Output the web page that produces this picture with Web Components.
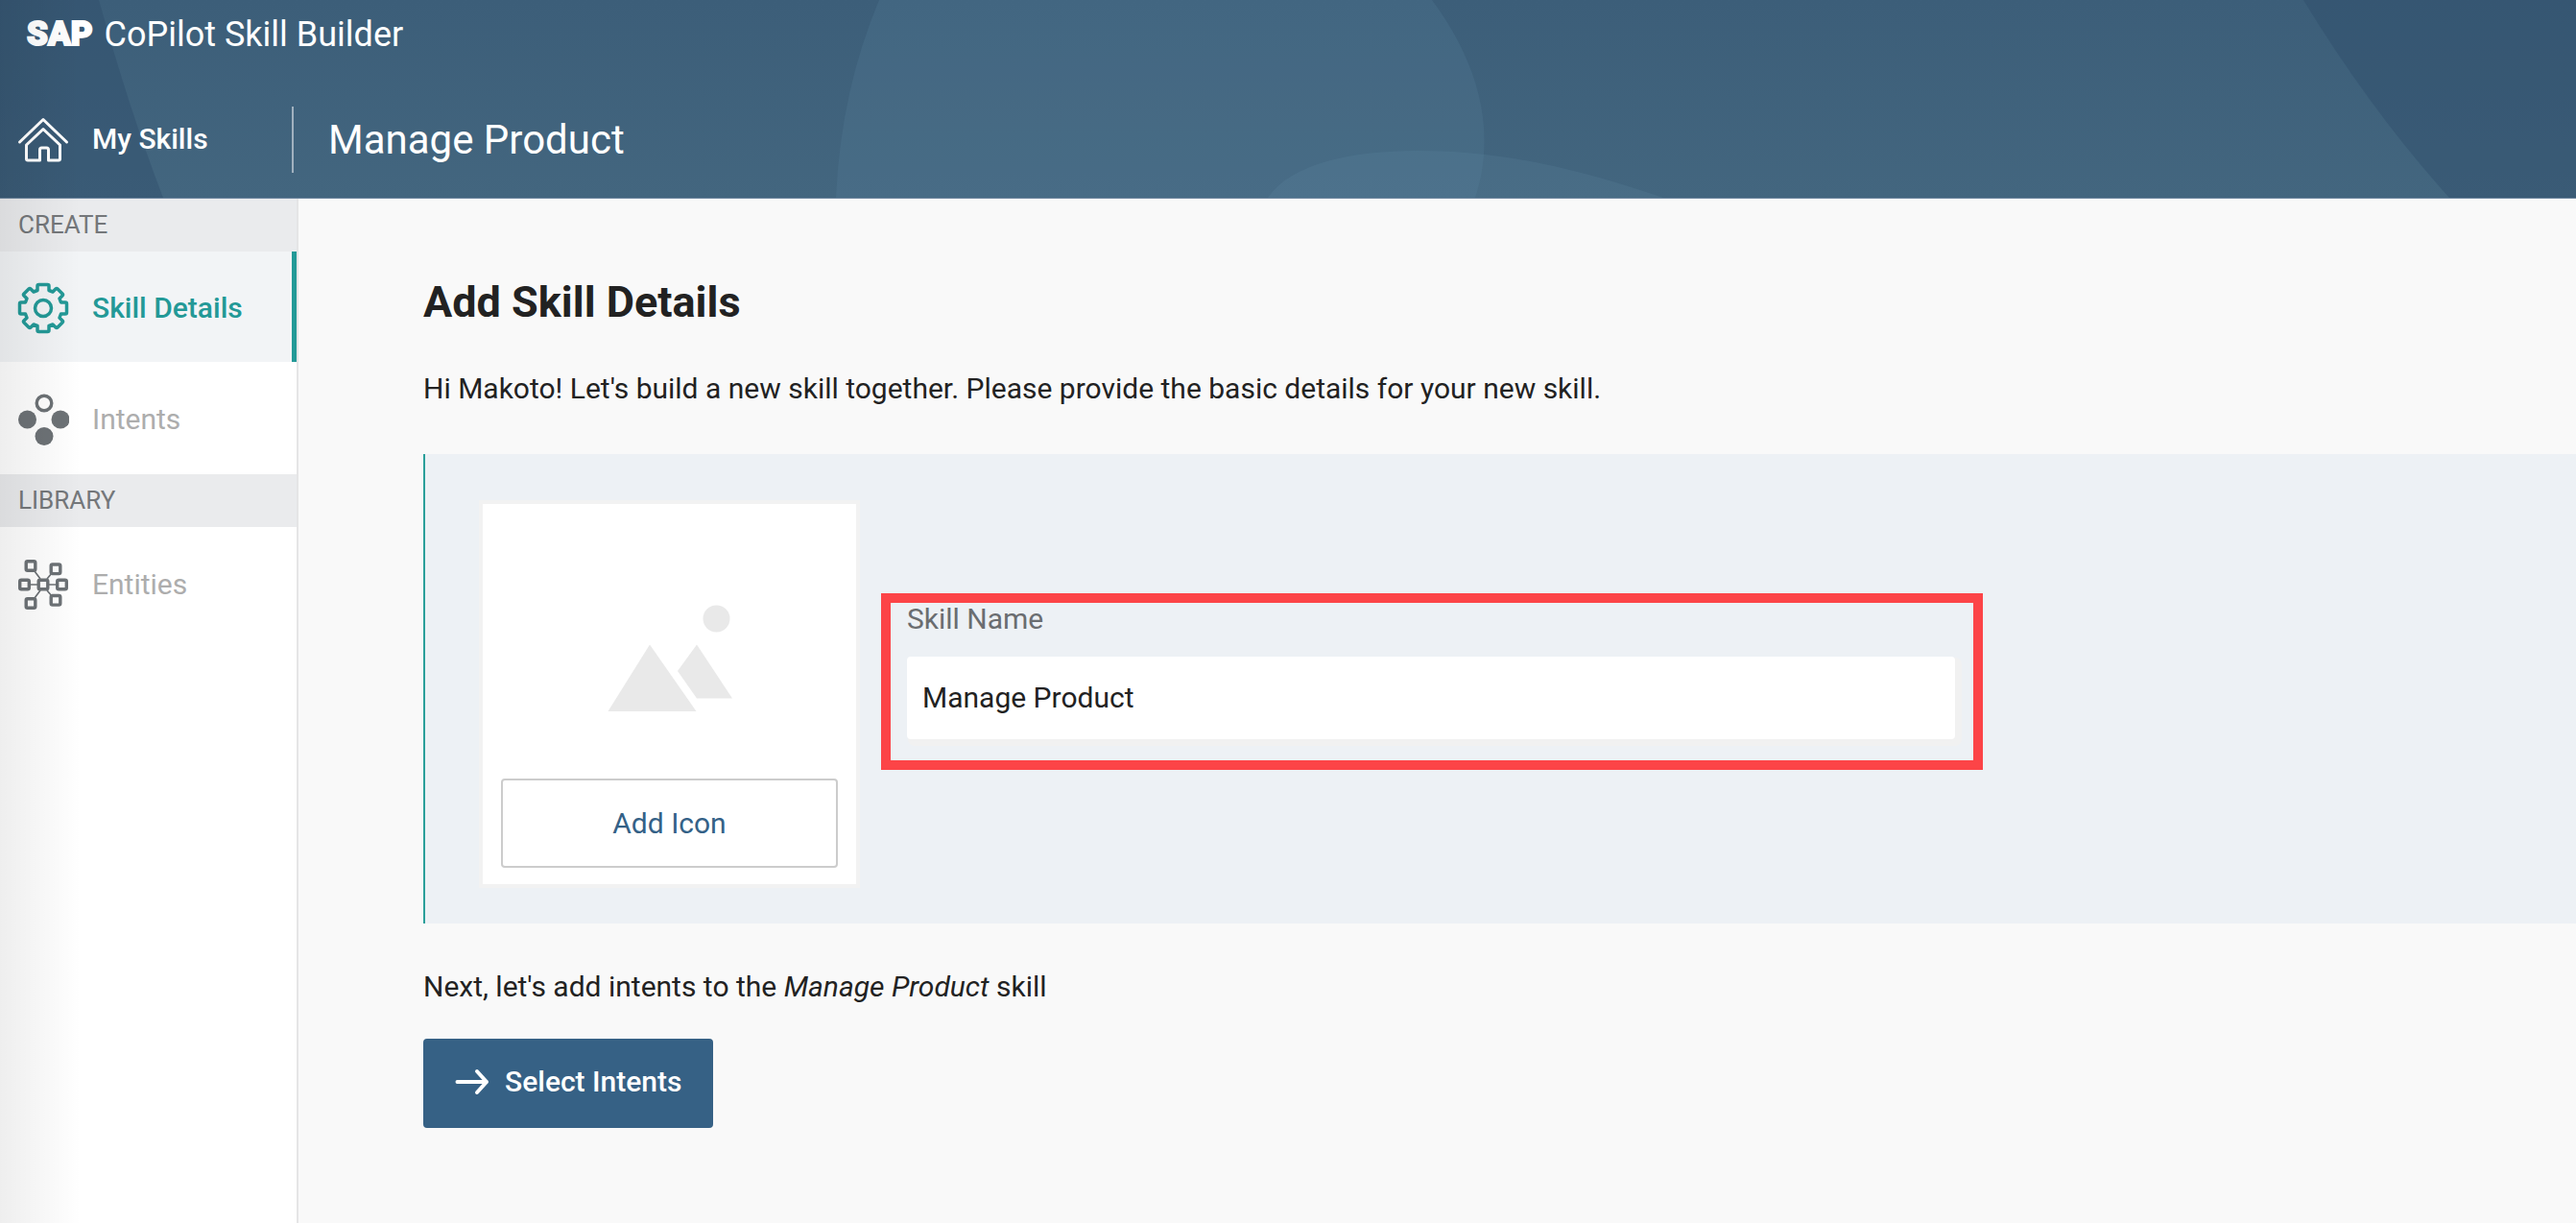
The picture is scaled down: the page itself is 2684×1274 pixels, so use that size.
<!DOCTYPE html>
<html lang="en">
<head>
<meta charset="utf-8">
<title>SAP CoPilot Skill Builder</title>
<style>
  html, body { margin: 0; min-height: 100%; }
  body { font-family: Roboto, "Liberation Sans", sans-serif; font-size: 30px; line-height: 40px; color: #222; background: #f9f9f9; }
</style>
</head>
<body>
<skill-app>
  <app-header slot="header" product="CoPilot Skill Builder" heading="Manage Product"></app-header>
  <side-nav slot="nav">
    <nav-group label="CREATE">
      <nav-item icon="gear" label="Skill Details" active></nav-item>
      <nav-item icon="intents" label="Intents"></nav-item>
    </nav-group>
    <nav-group label="LIBRARY">
      <nav-item icon="entities" label="Entities"></nav-item>
    </nav-group>
  </side-nav>
  <skill-details>
    <span slot="title">Add Skill Details</span>
    <span slot="intro">Hi Makoto! Let's build a new skill together. Please provide the basic details for your new skill.</span>
    <icon-picker slot="form"></icon-picker>
    <text-field slot="form" label="Skill Name" value="Manage Product"></text-field>
    <span slot="next">Next, let's add intents to the <em>Manage Product</em> skill</span>
    <primary-button slot="action">Select Intents</primary-button>
  </skill-details>
</skill-app>

<script>
const ICONS = {
  home: `<svg width="54" height="54" viewBox="0 0 54 54" fill="none" stroke="#fff" stroke-width="3" stroke-linecap="round" stroke-linejoin="round"><path d="M2.500 30 27 6.500 51.500 30"/><path d="M9.500 33 27 16.500 44.500 33V47.500Q44.500 49 43 49H32.500V38Q32.500 36 30.500 36H25.500Q23.500 36 23.500 38V49H11Q9.500 49 9.500 47.500Z"/></svg>`,
  gear: `<svg width="54" height="54" viewBox="-27 -27 54 54" fill="none" stroke="#239997" stroke-width="3.500" stroke-linejoin="round"><path d="M-6-20V-23Q-6-24.500-4.500-24.500H4.500Q6-24.500 6-23V-18.500L10-17L13-20Q14-21 15-20L20-15Q21-14 20-13L17-10L18.500-6H23Q24.500-6 24.500-4.500V4.500Q24.500 6 23 6H18.500L17 10L20 13Q21 14 20 15L15 20Q14 21 13 20L10 17L6 18.500V23Q6 24.500 4.500 24.500H-4.500Q-6 24.500-6 23V18.500L-10 17L-13 20Q-14 21-15 20L-20 15Q-21 14-20 13L-17 10L-18.500 6H-23Q-24.500 6-24.500 4.500V-4.500Q-24.500-6-23-6H-18.500L-17-10L-20-13Q-21-14-20-15L-15-20Q-14-21-13-20L-10-17L-6-18.500Z"/><circle r="8.500"/></svg>`,
  intents: `<svg width="54" height="54" viewBox="-27 -27 54 54" fill="#6d7276"><circle cx="1" cy="-17" r="7.800" fill="none" stroke="#6d7276" stroke-width="3.400"/><circle cx="-16.500" cy="0" r="9.500"/><circle cx="18" cy="0" r="9.500"/><circle cx="1" cy="17.500" r="9.500"/></svg>`,
  entities: `<svg width="54" height="54" viewBox="-27 -27 54 54" fill="none" stroke="#6d7276"><path stroke-width="1.700" d="M-9-14-3-6M9-12 4-6M-14 0H-5M14 0H5M-3 6-9 14M4 6 9 12"/><g stroke-width="3.400"><rect x="-4.800" y="-4.800" width="9.600" height="9.600" rx="1.500"/><rect x="-24.300" y="-4.800" width="9.600" height="9.600" rx="1.500"/><rect x="14.700" y="-4.800" width="9.600" height="9.600" rx="1.500"/><rect x="-17.800" y="-24.300" width="9.600" height="9.600" rx="1.500"/><rect x="8.200" y="-21" width="9.600" height="9.600" rx="1.500"/><rect x="-17.800" y="14.700" width="9.600" height="9.600" rx="1.500"/><rect x="8.200" y="11.500" width="9.600" height="9.600" rx="1.500"/></g></svg>`,
  picture: `<svg width="130" height="112" viewBox="0 0 130 112" fill="#e9e9e9"><circle cx="113.500" cy="14.500" r="14"/><path d="M0.500 111 44 41.500 92.500 111ZM93 41.500 130 97.500H93L73 69Z"/></svg>`,
  arrow: `<svg width="36" height="28" viewBox="0 0 36 28" fill="none" stroke="#fff" stroke-width="4" stroke-linecap="round" stroke-linejoin="round"><path d="M2.500 14H33M23 3 33 14 23 25"/></svg>`
};

class Base extends HTMLElement {
  connectedCallback() {
    if (this.shadowRoot) return;
    this.attachShadow({ mode: 'open' }).innerHTML = `<style>:host,*{box-sizing:border-box}svg{display:block;flex:none}${this.css()}</style>${this.html()}`;
  }
  attr(name) { return this.getAttribute(name) || ''; }
}

customElements.define('skill-app', class extends Base {
  css() { return `
    :host { display: flex; flex-direction: column; min-height: 100vh; position: relative; }
    .body { flex: 1; display: flex; }
    main { flex: 1; min-width: 0; }
    .shade { position: absolute; inset: 0 auto 0 0; width: 84px; pointer-events: none; background: linear-gradient(90deg, rgba(0,0,0,.065), transparent); }`; }
  html() { return `<slot name="header"></slot><div class="body"><slot name="nav"></slot><main><slot></slot></main></div><div class="shade"></div>`; }
});

customElements.define('app-header', class extends Base {
  css() { return `
    :host { display: grid; color: #fff; border-bottom: 1px solid #7088a0; background: linear-gradient(#3c5e79, #43667f); }
    .art, .content { grid-area: 1 / 1; min-width: 0; }
    .art { display: grid; width: 100%; height: 0; min-height: 100%; }
    .art svg { width: 100%; height: 100%; min-height: 0; }
    .brand { display: flex; align-items: center; gap: 12px; height: 72px; padding-left: 28px; }
    .logo { font-size: 35px; font-weight: 900; -webkit-text-stroke: 2px #fff; }
    .product { font-size: 36px; }
    .bar { display: flex; align-items: center; height: 134px; padding-top: 12px; }
    .home { display: flex; align-items: center; gap: 24px; width: 304px; padding-left: 18px; color: inherit; text-decoration: none; font-weight: 500; }
    .title { margin: 0; height: 69px; line-height: 70px; border-left: 2px solid #a1b1bf; padding-left: 36px; font-size: 42px; font-weight: 400; }`; }
  html() { return `
    <div class="art" aria-hidden="true"><svg viewBox="0 0 2684 206" preserveAspectRatio="none">
      <path d="M0 0H103Q135 115 170 206H0Z" fill="#2c4c69" opacity=".4"/>
      <path d="M2400 0H2684V206H2552Q2470 115 2400 0Z" fill="#2c4c69" opacity=".4"/>
      <path d="M916 0H1492C1540 65 1560 135 1537 206H871Q876 95 916 0Z" fill="#5b86a0" opacity=".22"/>
      <path d="M1321 206C1345 170 1410 157 1477 157C1570 157 1650 178 1733 206Z" fill="#6b97b0" opacity=".16"/>
    </svg></div>
    <div class="content">
      <div class="brand"><span class="logo">SAP</span><span class="product">${this.attr('product')}</span></div>
      <div class="bar"><a class="home" href="#">${ICONS.home}<span>My Skills</span></a><h1 class="title">${this.attr('heading')}</h1></div>
    </div>`; }
});

customElements.define('side-nav', class extends Base {
  css() { return `:host { display: block; flex: none; width: 311px; background: #fff; border-right: 2px solid #e5e5e6; }`; }
  html() { return `<nav><slot></slot></nav>`; }
});

customElements.define('nav-group', class extends Base {
  css() { return `
    :host { display: block; }
    h2 { margin: 0; height: 55px; line-height: 54px; padding-left: 19px; background: #eaebed; color: #74777a; font-size: 26px; font-weight: 400; }`; }
  html() { return `<h2>${this.attr('label')}</h2><slot></slot>`; }
});

customElements.define('nav-item', class extends Base {
  css() { return `
    :host { display: block; }
    a { display: flex; align-items: center; gap: 24px; height: 117px; padding: 3px 0 0 18px; color: #adadad; text-decoration: none; }
    :host([active]) a { height: 115px; color: #239997; background: #f2f4f6; border-right: 5px solid #239997; font-weight: 500; }`; }
  html() { return `<a href="#"${this.hasAttribute('active') ? ' aria-current="page"' : ''}>${ICONS[this.attr('icon')]}<span>${this.attr('label')}</span></a>`; }
});

customElements.define('skill-details', class extends Base {
  css() { return `
    :host { display: block; padding: 80px 0 40px 130px; }
    h2 { margin: 0; font-size: 45px; line-height: 56px; font-weight: 700; }
    p { margin: 0; }
    .intro { padding: 42px 0 48px; }
    .panel { display: flex; align-items: flex-start; gap: 22px; padding: 48px 40px 37px 56px; background: #edf1f5; border-left: 2px solid #2a9f9a; }
    .next { padding: 46px 0 34px; }`; }
  html() { return `
    <h2><slot name="title"></slot></h2>
    <p class="intro"><slot name="intro"></slot></p>
    <section class="panel"><slot name="form"></slot></section>
    <p class="next"><slot name="next"></slot></p>
    <slot name="action"></slot>`; }
});

customElements.define('icon-picker', class extends Base {
  css() { return `
    :host { display: block; flex: none; width: 397px; background: #fff; border: 4px solid #f2f2f2; padding: 105px 19px 17px; }
    svg { margin: 0 auto 69px; }
    button { display: block; width: 100%; height: 93px; background: #fff; border: 2px solid #ccc; border-radius: 4px; font: inherit; color: #346187; cursor: pointer; }`; }
  html() { return `${ICONS.picture}<button type="button">Add Icon</button>`; }
});

customElements.define('text-field', class extends Base {
  css() { return `
    :host { display: block; flex: 0 1 1148px; margin-top: 97px; border: 10px solid #fc4447; padding: 0 19px 22px 17px; }
    label { display: block; height: 56px; line-height: 34px; color: #6a6d70; }
    input { display: block; width: 100%; height: 86px; border: 0; border-radius: 4px; padding: 0 16px 2px; font: inherit; color: #222; background: #fff; box-shadow: 4px 4px 0 3px #f1f1f1; outline: 0; }`; }
  html() { return `<label for="field">${this.attr('label')}</label><input id="field" type="text" value="${this.attr('value')}">`; }
});

customElements.define('primary-button', class extends Base {
  css() { return `
    :host { display: block; }
    button { display: flex; align-items: center; gap: 16px; height: 93px; padding: 0 33px 4px; border: 0; border-radius: 4px; background: #366185; color: #fff; font: inherit; font-weight: 500; cursor: pointer; }`; }
  html() { return `<button type="button">${ICONS.arrow}<span><slot></slot></span></button>`; }
});
</script>
</body>
</html>
